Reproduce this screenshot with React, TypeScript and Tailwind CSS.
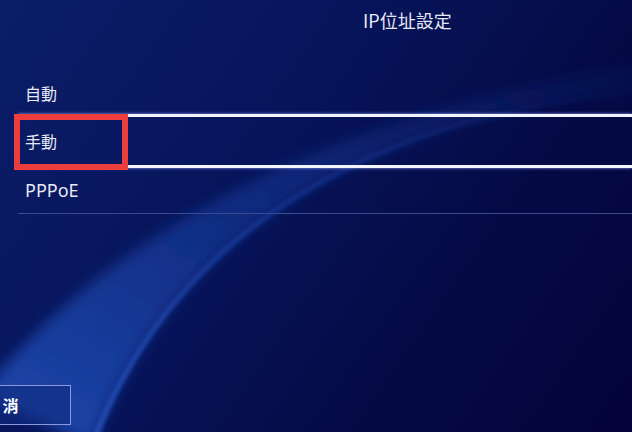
import React from "react";

const font = { fontFamily: '"Noto Sans CJK TC", "Noto Sans", sans-serif' };

function Wave() {
  return (
    <svg className="absolute inset-0 w-full h-full" viewBox="0 0 632 432" preserveAspectRatio="none">
      <defs>
        <linearGradient id="band" x1="0" y1="1" x2="1" y2="0">
          <stop offset="0" stopColor="#1f4fb8" stopOpacity="0.9" />
          <stop offset="0.45" stopColor="#1a46ae" stopOpacity="0.5" />
          <stop offset="1" stopColor="#1a3ea0" stopOpacity="0.08" />
        </linearGradient>
        <linearGradient id="edge" x1="0" y1="1" x2="1" y2="0">
          <stop offset="0" stopColor="#2f66e0" stopOpacity="0.8" />
          <stop offset="0.5" stopColor="#2a5ad0" stopOpacity="0.4" />
          <stop offset="1" stopColor="#2a5ad0" stopOpacity="0" />
        </linearGradient>
        <filter id="soft" x="-20%" y="-20%" width="140%" height="140%">
          <feGaussianBlur stdDeviation="7" />
        </filter>
        <filter id="soft2" x="-20%" y="-20%" width="140%" height="140%">
          <feGaussianBlur stdDeviation="2" />
        </filter>
      </defs>
      <path
        d="M -20 395 C 90 260, 270 125, 650 62 L 650 90 C 360 115, 170 240, 92 445 Z"
        fill="url(#band)"
        filter="url(#soft)"
      />
      <path
        d="M 650 90 C 360 115, 170 240, 92 445"
        fill="none"
        stroke="url(#edge)"
        strokeWidth="4"
        filter="url(#soft2)"
      />
    </svg>
  );
}

export default function App() {
  return (
    <div
      className="relative w-[632px] h-[432px] overflow-hidden bg-[linear-gradient(125deg,#0b1d68_0%,#07145a_40%,#050a45_70%,#04033a_100%)] text-[#e6e9f6]"
      style={font}
    >
      <Wave />

      <div className="relative flex flex-col h-full">
        {/* Title */}
        <div className="pl-[363px] pt-[8px] h-[64px] text-[18px] leading-[24px]">IP位址設定</div>

        {/* Options */}
        <div className="ml-[18px] flex flex-col">
          <div className="h-[50px] flex items-center pt-[7px] pl-[7px] text-[16px]">自動</div>
          <div className="h-[54px] flex items-center pl-[7px] text-[16px] border-y-[3px] border-[#f2f4ff] shadow-[0_0_3px_#8f9cff]">
            手動
          </div>
          <div className="h-[46px] flex items-center pl-[7px] text-[18px] border-b border-[#3a4a8c]" style={{ fontFamily: '"Noto Sans", sans-serif' }}>
            PPPoE
          </div>
        </div>

        {/* Cancel */}
        <div className="mt-auto mb-[7px] -ml-[72px] w-[143px] h-[40px] flex items-center justify-center border-[1.5px] border-[#8e98da] bg-[#0f2a7e]/60 text-white font-bold text-[16px] tracking-[6px] pl-[6px]">
          取消
        </div>
      </div>

      {/* highlight annotation */}
      <div className="absolute left-[14px] top-[114px] w-[114px] h-[56px] border-[6px] border-[#ee3d3d]" />
    </div>
  );
}
